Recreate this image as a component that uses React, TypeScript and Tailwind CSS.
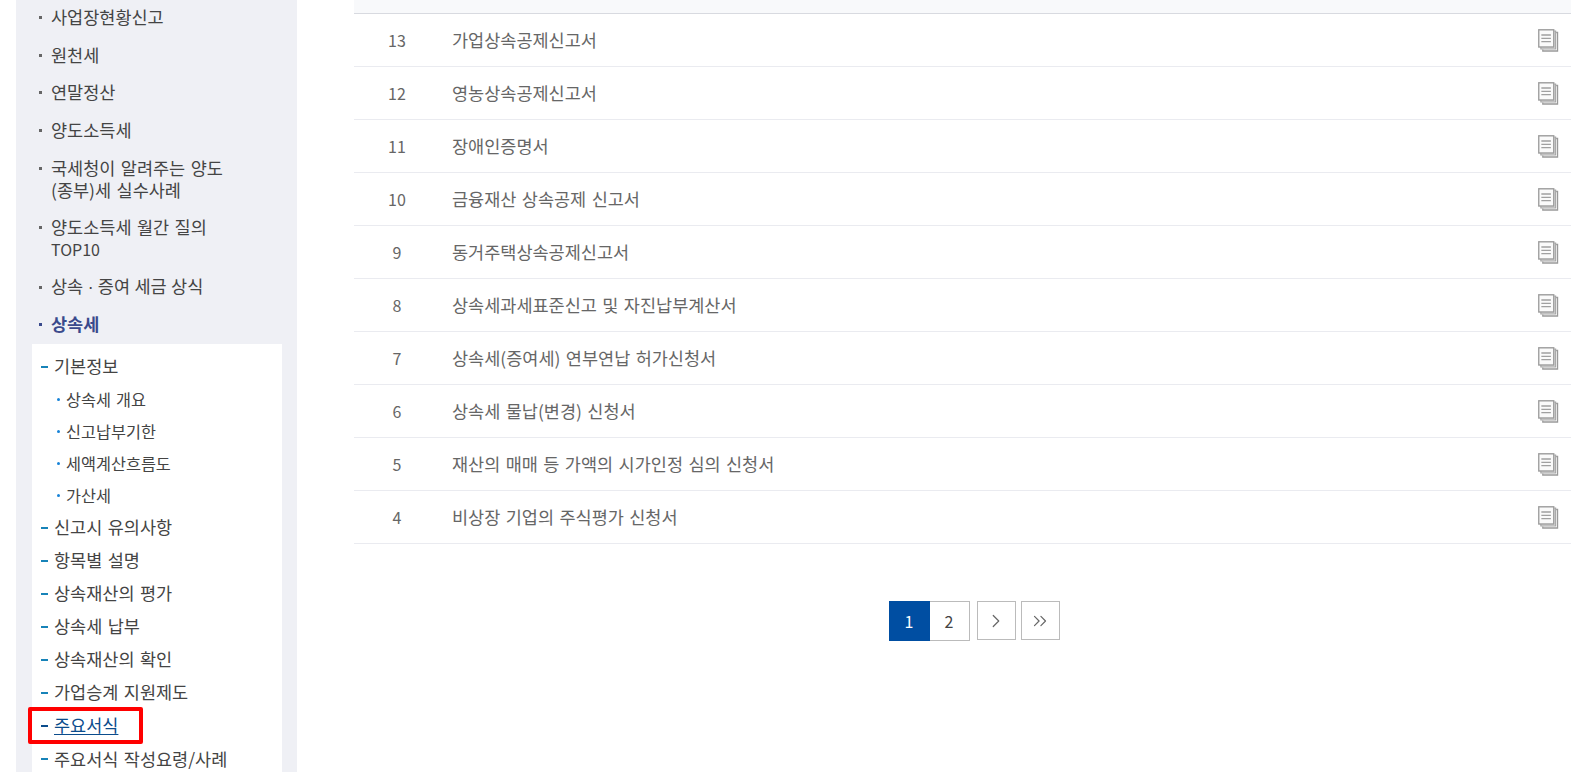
import { ChevronRight, ChevronsRight } from "lucide-react";

const font = "font-['Noto_Sans_CJK_KR','Noto_Sans',sans-serif]";

const menu = [
  { lines: ["사업장현황신고"], h: "h-[38px]" },
  { lines: ["원천세"], h: "h-[37px]" },
  { lines: ["연말정산"], h: "h-[38px]" },
  { lines: ["양도소득세"], h: "h-[38px]" },
  { lines: ["국세청이 알려주는 양도", "(종부)세 실수사례"], h: "h-[59px]" },
  { lines: ["양도소득세 월간 질의", "TOP10"], h: "h-[60px]" },
];

const subTop = ["상속세 개요", "신고납부기한", "세액계산흐름도", "가산세"];
const subRest = ["신고시 유의사항", "항목별 설명", "상속재산의 평가", "상속세 납부", "상속재산의 확인", "가업승계 지원제도"];

const rows = [
  [13, "가업상속공제신고서"],
  [12, "영농상속공제신고서"],
  [11, "장애인증명서"],
  [10, "금융재산 상속공제 신고서"],
  [9, "동거주택상속공제신고서"],
  [8, "상속세과세표준신고 및 자진납부계산서"],
  [7, "상속세(증여세) 연부연납 허가신청서"],
  [6, "상속세 물납(변경) 신청서"],
  [5, "재산의 매매 등 가액의 시가인정 심의 신청서"],
  [4, "비상장 기업의 주식평가 신청서"],
];

function DocIcon() {
  return (
    <svg width="21" height="23" viewBox="0 0 22 23" fill="none" preserveAspectRatio="none">
      <path d="M19 3.5h1.5v18.5h-15.5v-1.5" stroke="#999" strokeWidth="1.3" />
      <path d="M17 2h1.5v18h-15.5v-2" fill="#dedede" stroke="#a5a5a5" strokeWidth="1.2" />
      <rect x="0.8" y="0.8" width="15.7" height="17.2" fill="#fafafa" stroke="#9c9c9c" strokeWidth="1.4" />
      <path d="M3.5 6h10M3.5 9.3h10M3.5 12.6h10" stroke="#a0a0a0" strokeWidth="1.3" />
    </svg>
  );
}

function Dash({ dark }: { dark?: boolean }) {
  return <span className={`mr-[6px] h-[2px] w-[7px] shrink-0 ${dark ? "bg-[#0b4c8c]" : "bg-[#1783b8]"}`} />;
}

export default function App() {
  return (
    <div className={`flex h-[772px] w-[1571px] overflow-hidden bg-white ${font} [word-spacing:1.5px]`}>
      {/* 왼쪽 메뉴 */}
      <aside className="ml-4 w-[281px] shrink-0 bg-[#eff0f5]">
        <ul className="-mt-[2px] text-[17.5px] text-[#444]">
          {menu.map((m) => (
            <li key={m.lines[0]} className={`flex items-center pl-[23px] ${m.h}`}>
              <div className="relative pl-[12px] leading-[22px]">
                <span className="absolute left-0 top-[10px] h-[3px] w-[3px] bg-[#666]" />
                {m.lines.map((l) => (
                  <div key={l} className={l === "TOP10" ? "text-[16px]" : "whitespace-nowrap"}>{l}</div>
                ))}
              </div>
            </li>
          ))}
          <li className="flex h-[38px] items-center pl-[23px] [word-spacing:0.5px]">
            <span className="mr-[9px] h-[3px] w-[3px] bg-[#666]" />
            <span>
              상속 <span className="font-['Liberation_Sans',sans-serif]">·</span> 증여 세금 상식
            </span>
          </li>
          <li className="flex h-[37px] items-center pl-[23px] font-bold text-[#3a4a8c]">
            <span className="mr-[9px] h-[3px] w-[3px] bg-[#3a4a8c]" />
            상속세
          </li>
        </ul>

        <div className="mx-4 mt-[1px] w-[250px] bg-white pt-[6px] text-[17.5px] text-[#444]">
          <div className="flex h-[33px] items-center pl-[9px]">
            <Dash />
            기본정보
          </div>
          {subTop.map((s) => (
            <div key={s} className="flex h-[32px] items-center pl-[25px] text-[16.3px]">
              <span className="mr-[6px] h-[3px] w-[3px] rounded-full bg-[#1783d8]" />
              {s}
            </div>
          ))}
          {subRest.map((s) => (
            <div key={s} className="flex h-[33px] items-center pl-[9px]">
              <Dash />
              {s}
            </div>
          ))}
          <div className="relative flex h-[33px] items-center pl-[9px] text-[#0b4c8c]">
            <Dash dark />
            <span className="underline underline-offset-2">주요서식</span>
            <span className="absolute -left-1 top-[-2px] h-[37px] w-[115px] rounded-[2px] border-4 border-[#ff0000]" />
          </div>
          <div className="flex h-[34px] items-center pl-[9px]">
            <Dash />
            주요서식 작성요령/사례
          </div>
        </div>
      </aside>

      {/* 본문 목록 */}
      <main className="ml-[57px] flex-1">
        <div className="h-[14px] border-b border-[#d8dae0] bg-[#f8f9fb]" />
        {rows.map(([no, title]) => (
          <div key={no} className="flex h-[53px] items-center border-b border-[#eaebf0] text-[17.5px] text-[#666]">
            <div className="w-[86px] text-center text-[16px]">{no}</div>
            <div className="ml-[12px] flex-1">{title}</div>
            <div className="mr-[12px] flex w-[22px] justify-center"><DocIcon /></div>
          </div>
        ))}

        <nav className="mt-[57px] flex items-start justify-center text-[16px] text-[#444]">
          <div className="ml-[23px] flex">
            <span className="flex h-[40px] w-[41px] items-center justify-center bg-[#004ea2] text-white">1</span>
            <span className="flex h-[40px] w-[40px] items-center justify-center border border-l-0 border-[#bbb]">2</span>
          </div>
          <span className="ml-[7px] flex h-[39px] w-[39px] items-center justify-center border border-[#bbb] text-[#666]">
            <ChevronRight size={22} strokeWidth={1.3} />
          </span>
          <span className="ml-[5px] flex h-[39px] w-[39px] items-center justify-center border border-[#bbb] text-[#666]">
            <ChevronsRight size={22} strokeWidth={1.3} />
          </span>
        </nav>
      </main>
    </div>
  );
}
